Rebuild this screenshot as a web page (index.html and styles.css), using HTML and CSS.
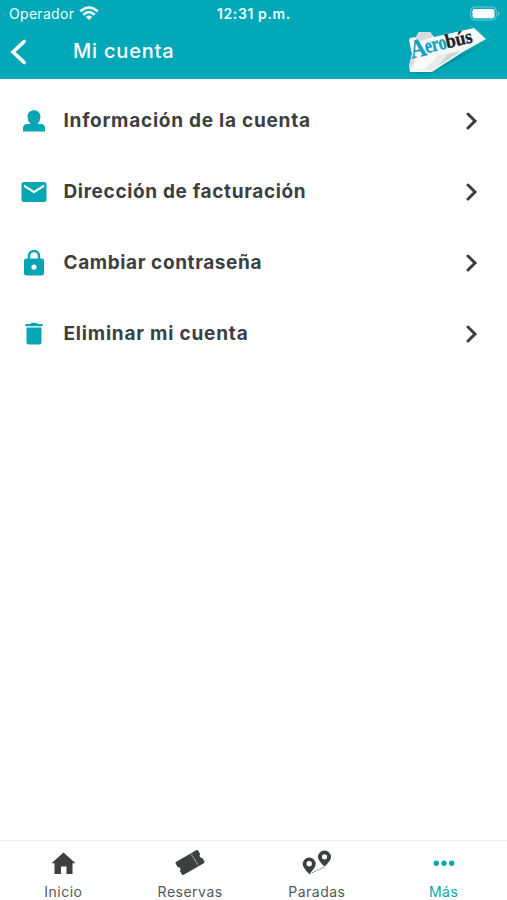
FILE: index.html
```html
<!DOCTYPE html>
<html lang="es">
<head>
<meta charset="utf-8">
<title>Mi cuenta</title>
<link rel="stylesheet" href="styles.css">
</head>
<body>
<header class="header">
  <div class="status">
    <span class="carrier">Operador</span>
    <svg class="wifi" width="20" height="15" viewBox="0 0 20 15"><g fill="none" stroke="#eaffff" stroke-width="2.6"><path d="M1.2 5.400Q10-2.400 18.800 5.400"/><path d="M4.300 8.800Q10 3.600 15.700 8.800"/></g><path d="M6.800 10.900Q10 8.300 13.200 10.900L10 14Z" fill="#eaffff"/></svg>
    <span class="clock">12:31 p.m.</span>
    <svg class="battery" width="30" height="16" viewBox="0 0 30 16"><rect x=".7" y="1" width="25.6" height="13" rx="4" fill="none" stroke="#6fced6"/><rect x="2.500" y="3" width="22" height="9.300" rx="2.200" fill="#fff"/><path d="M28 5.500v4.500q1.500-.7 1.500-2.200T28 5.500Z" fill="#6fced6"/></svg>
  </div>
  <div class="bar">
    <svg class="back" width="18" height="28" viewBox="0 0 18 28"><path d="M15.200 3.500 4 14l11.200 10.500" fill="none" stroke="#fff" stroke-width="3.600" stroke-linecap="round" stroke-linejoin="miter"/></svg>
    <h1 class="title">Mi cuenta</h1>
    <svg class="logo" width="84" height="50" viewBox="0 0 84 50">
      <defs><linearGradient id="paper" x1="0" y1="0" x2="1" y2="1"><stop offset="0" stop-color="#fff"/><stop offset=".65" stop-color="#f5f6f6"/><stop offset="1" stop-color="#ccd1d2"/></linearGradient></defs>
      <path d="M4 48 24 47 54 31 78 16 30 41Z" fill="#087f89" opacity=".55"/>
      <path d="M2 12 8 11 11 6 22 6 26 11 66 2 78 13 53 27 24 46 2 46 1 40 4 28 1 14Z" fill="url(#paper)"/>
      <path d="M8 11 11 6 22 6 26 11 16 14 7 18ZM4 28 7 32 4 44 1 40Z" fill="#d8dcdc"/>
      <path d="M8 34 53 25 24 45 3 43Z" fill="#e9ebeb"/>
      <path d="M8 34 30 29 17 43 3 43Z" fill="#fafafa"/>
      <path d="M40 28 53 25 30 40Z" fill="#cfd3d4"/>
      <g transform="translate(4 32.500) rotate(-13)" class="logo-text"><text x="0" y="0" font-size="26" textLength="16" lengthAdjust="spacingAndGlyphs" fill="#159fc5" stroke="#159fc5">A</text><text x="15" y="-2" font-size="21" textLength="22" lengthAdjust="spacingAndGlyphs" fill="#159fc5" stroke="#159fc5">ero</text><text x="36.500" y="-2" font-size="19.500" textLength="27" lengthAdjust="spacingAndGlyphs" fill="#202426" stroke="#202426">bús</text></g>
    </svg>
  </div>
</header>
<main class="list">
  <a class="row"><svg class="icon" width="28" height="28" viewBox="0 0 28 28"><path d="M3 24.500v-3.500Q3 17.500 6.500 17h4Q7.500 13.800 7.500 9.700C7.500 5.600 10.300 3.200 14 3.200s6.500 2.400 6.500 6.500Q20.500 13.800 17.500 17h4Q25 17.500 25 21V24.500Z"/></svg><span class="label l1">Información de la cuenta</span><svg class="chev" width="12" height="18" viewBox="0 0 12 18"><path d="m2 2 7 7-7 7"/></svg></a>
  <a class="row"><svg class="icon" width="28" height="28" viewBox="0 0 28 28"><path fill-rule="evenodd" d="M4 4h20q2.500 0 2.500 2.500v15Q26.500 24 24 24H4q-2.500 0-2.500-2.500v-15Q1.500 4 4 4Zm0 2.500V9l10 6.300L24 9V6.500l-10 6.300Z"/></svg><span class="label l2">Dirección de facturación</span><svg class="chev" width="12" height="18" viewBox="0 0 12 18"><path d="m2 2 7 7-7 7"/></svg></a>
  <a class="row"><svg class="icon" width="28" height="28" viewBox="0 0 28 28"><path d="M9 12V7a5 5 0 0 1 10 0V12" fill="none" stroke="#08a5b4" stroke-width="2.400"/><path fill-rule="evenodd" d="M6.300 9.500h15.400q2.300 0 2.300 2.300v12.400q0 2.300-2.300 2.300H6.300Q4 26.500 4 24.200V11.800q0-2.300 2.300-2.300ZM14 15.400a2.600 2.600 0 1 0 0 5.200 2.600 2.600 0 0 0 0-5.200Z"/></svg><span class="label l3">Cambiar contraseña</span><svg class="chev" width="12" height="18" viewBox="0 0 12 18"><path d="m2 2 7 7-7 7"/></svg></a>
  <a class="row"><svg class="icon" width="28" height="28" viewBox="0 0 28 28"><path d="M5.300 4h4.900l1.300-1.300h5L17.800 4h4.900v2.200H5.300ZM6.500 7.400h15v14.800q0 2.300-2.300 2.300H8.800q-2.300 0-2.300-2.300Z"/></svg><span class="label l4">Eliminar mi cuenta</span><svg class="chev" width="12" height="18" viewBox="0 0 12 18"><path d="m2 2 7 7-7 7"/></svg></a>
</main>
<nav class="tabs">
  <a class="tab"><svg width="32" height="28" viewBox="0 0 32 28"><path d="M16.500 2.500 28.500 13.200h-3V24h-6v-7.500H14V24H7.500V13.200h-3Z"/></svg><span class="t1">Inicio</span></a>
  <a class="tab"><svg width="32" height="28" viewBox="0 0 32 28"><g transform="rotate(-30 16 12.500)"><path d="M4.500 5h23Q29 5 29 6.500v3.700a2.500 2.500 0 0 0 0 4.600v3.700q0 1.500-1.500 1.500h-23Q3 20 3 18.500v-3.700a2.500 2.500 0 0 0 0-4.600V6.500Q3 5 4.500 5Z"/><path d="M21.500 6v13" stroke="#a0a4a4" stroke-width="1.500" stroke-dasharray="1.500 1"/></g></svg><span class="t2">Reservas</span></a>
  <a class="tab"><svg width="32" height="28" viewBox="0 0 32 28"><path fill-rule="evenodd" d="M8.200 24Q1.700 17.500 1.700 14a6.500 6.500 0 0 1 13 0Q14.700 17.500 8.200 24Zm0-13a2.700 2.700 0 1 0 0 5.400 2.700 2.700 0 0 0 0-5.400ZM23.500 16.500Q17 10.500 17 7a6.500 6.500 0 0 1 13 0Q30 10.500 23.500 16.500Zm0-12.300a2.600 2.600 0 1 0 0 5.200 2.600 2.600 0 0 0 0-5.200Z"/><path d="m8.200 24 15.300-7" stroke="#555" stroke-width=".8" stroke-dasharray="2 .8"/></svg><span class="t3">Paradas</span></a>
  <a class="tab active"><svg width="32" height="28" viewBox="0 0 32 28"><circle cx="8.300" cy="13.200" r="2.700"/><circle cx="16" cy="13.200" r="2.700"/><circle cx="23.700" cy="13.200" r="2.700"/></svg><span class="t4">Más</span></a>
</nav>
</body>
</html>
```
FILE: styles.css
```css
* { box-sizing: border-box; }
body {
  margin: 0;
  height: 900px;
  display: flex;
  flex-direction: column;
  background: #fff;
  color: #3c3f40;
  font-family: Inter, sans-serif;
  overflow: hidden;
}
svg { display: block; flex: none; }
.header { height: 79px; background: #02a8b8; color: #fff; flex: none; }
.status {
  height: 27px;
  display: grid;
  grid-template-columns: 70px 138px 1fr 37px;
  align-items: center;
  padding-left: 9px;
  color: #eaffff;
}
.carrier { font-size: 14px; letter-spacing: .3px; }
.clock { font-size: 14px; font-weight: 600; letter-spacing: .6px; }
.bar { height: 52px; display: flex; align-items: flex-start; padding-left: 9px; }
.back { margin-top: 11px; }
.title { margin: 11px 0 0 46px; font-size: 20px; line-height: 26px; font-weight: 500; letter-spacing: .8px; white-space: nowrap; }
.logo { margin: -1px 15px 0 auto; }
.logo-text { font-family: "Liberation Serif", serif; font-weight: 700; stroke-width: .4; }
.list { flex: 1; padding: 6px 29.5px 0 20px; }
.row { height: 71px; display: flex; align-items: center; }
.icon { fill: #08a5b4; }
.label { margin-left: 15.5px; font-size: 19px; line-height: 26px; font-weight: 650; letter-spacing: .75px; white-space: nowrap; }
.l2 { letter-spacing: .65px; }
.l3 { letter-spacing: .6px; }
.l4 { letter-spacing: .8px; }
.chev { margin-left: auto; fill: none; stroke: #3c3f40; stroke-width: 3; stroke-linecap: round; stroke-linejoin: miter; }
.tabs { height: 60px; flex: none; border-top: 1px solid #ececec; display: grid; grid-template-columns: repeat(4, 1fr); }
.tab { display: flex; flex-direction: column; align-items: center; padding-top: 9px; font-size: 14px; line-height: 20px; color: #555859; fill: #3c4040; }
.tab span { margin-top: 4px; letter-spacing: .5px; }
.tab.active { color: #08a5b4; fill: #08a5b4; }
```
